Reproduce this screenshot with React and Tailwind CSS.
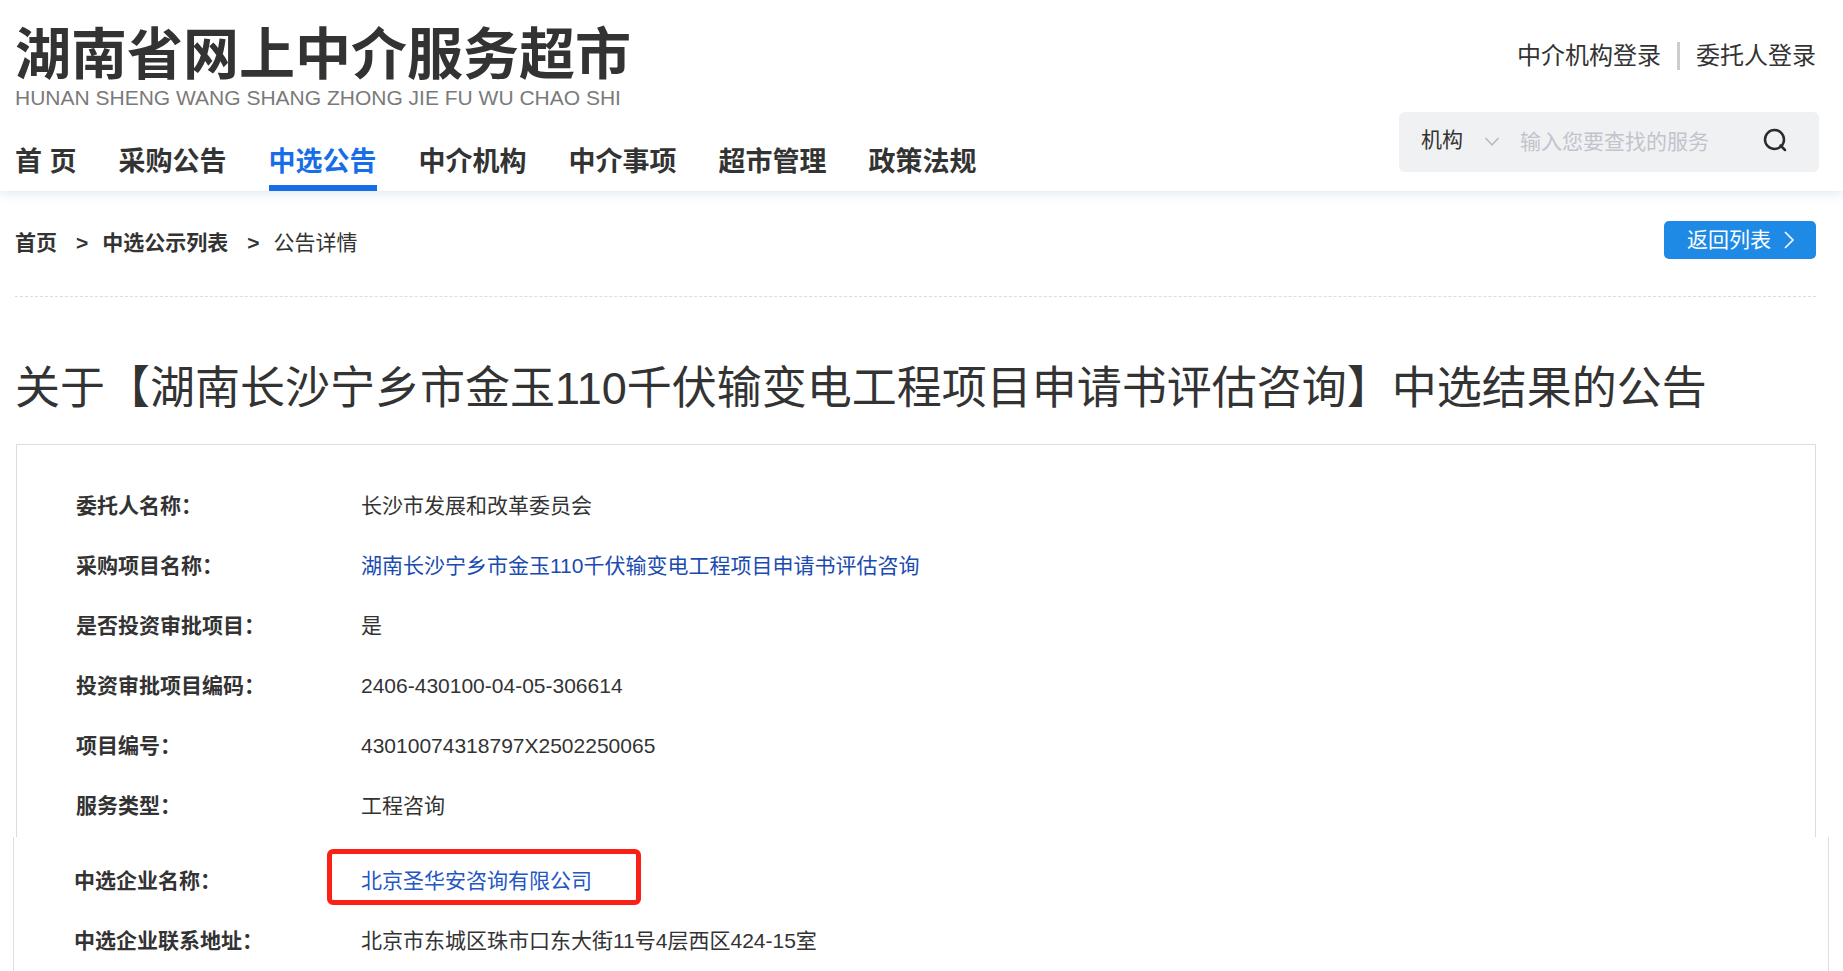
import { useState } from "react";

const navItems = ["首 页", "采购公告", "中选公告", "中介机构", "中介事项", "超市管理", "政策法规"];

const projectRows = [
  { label: "委托人名称：", value: "长沙市发展和改革委员会" },
  { label: "采购项目名称：", value: "湖南长沙宁乡市金玉110千伏输变电工程项目申请书评估咨询", link: true },
  { label: "是否投资审批项目：", value: "是" },
  { label: "投资审批项目编码：", value: "2406-430100-04-05-306614" },
  { label: "项目编号：", value: "43010074318797X2502250065" },
  { label: "服务类型：", value: "工程咨询" },
];

const winnerRows = [
  { label: "中选企业名称：", value: "北京圣华安咨询有限公司", link: true, marked: true },
  { label: "中选企业联系地址：", value: "北京市东城区珠市口东大街11号4层西区424-15室" },
];

function DetailValue({ row }) {
  if (row.marked) {
    return (
      <a
        href="#company"
        className="-mt-2 -ml-[34px] flex h-14 items-center rounded-md border-[5px] border-[#fb2016] pt-2 pr-[44px] pl-[29px] text-[#2456c4]"
      >
        {row.value}
      </a>
    );
  }
  if (row.link) {
    return (
      <a href="#project" className="text-[#1a4bb0] hover:underline">
        {row.value}
      </a>
    );
  }
  return row.value;
}

function DetailRows({ rows, labelClass }) {
  return (
    <dl className="flex flex-col gap-7 text-[21px] leading-8">
      {rows.map((row) => (
        <div key={row.label} className="flex h-8 items-center">
          <dt className={`shrink-0 font-bold ${labelClass}`}>{row.label}</dt>
          <dd className="flex items-center">
            <DetailValue row={row} />
          </dd>
        </div>
      ))}
    </dl>
  );
}

function SearchBar() {
  const [type, setType] = useState("机构");
  const [keyword, setKeyword] = useState("");

  return (
    <form
      onSubmit={(event) => event.preventDefault()}
      className="flex h-15 w-[420px] items-center rounded-md bg-[#f0f1f3] pr-8 pl-[22px]"
    >
      <div className="relative flex w-[99px] items-center">
        <select
          aria-label="搜索类型"
          value={type}
          onChange={(event) => setType(event.target.value)}
          className="h-10 w-20 appearance-none bg-transparent pb-1 text-[21px] text-[#333] outline-none"
        >
          <option value="机构">机构</option>
          <option value="服务">服务</option>
        </select>
        <svg
          className="pointer-events-none absolute left-[63px]"
          width="16"
          height="12"
          viewBox="0 0 16 12"
          fill="none"
          stroke="#b4b8bf"
          strokeWidth="1.5"
        >
          <path d="M1.5 2 8 9 14.5 2" />
        </svg>
      </div>
      <input
        aria-label="关键词"
        value={keyword}
        onChange={(event) => setKeyword(event.target.value)}
        placeholder="输入您要查找的服务"
        className="h-10 min-w-0 flex-1 bg-transparent text-[21px] text-[#333] outline-none placeholder:text-[#c0c4cc]"
      />
      <button type="submit" aria-label="搜索" className="pb-1">
        <svg width="24" height="24" viewBox="0 0 24 24" fill="none" stroke="#2b2b2b" strokeWidth="2.5">
          <circle cx="11.5" cy="11.5" r="9.5" />
          <path d="m17.5 17.5 4.5 4.5" strokeLinecap="round" />
        </svg>
      </button>
    </form>
  );
}

export default function App() {
  const [active, setActive] = useState("中选公告");

  return (
    <div className="flex min-h-screen flex-col bg-white font-['Liberation_Sans','Noto_Sans_CJK_SC',sans-serif] text-[#333]">
      <header className="flex justify-between bg-white pr-6 pl-[15px] shadow-[0_2px_12px_#dbe7ee]">
        <div>
          <h1 className="pt-[26px] text-[56px] leading-[58px] font-bold">湖南省网上中介服务超市</h1>
          <p className="text-[21px] leading-7 text-[#7a7a7a]">HUNAN SHENG WANG SHANG ZHONG JIE FU WU CHAO SHI</p>
          <nav className="mt-7 flex gap-[42px]">
            {navItems.map((item) => (
              <a
                key={item}
                href="#nav"
                onClick={() => setActive(item)}
                className={`border-b-6 pt-[2px] pb-[2px] text-[27px] leading-[41px] font-bold ${
                  item === active ? "border-[#176ee6] text-[#176ee6]" : "border-transparent"
                }`}
              >
                {item}
              </a>
            ))}
          </nav>
        </div>
        <div className="flex flex-col items-end pt-9">
          <div className="flex items-center pr-[3px] text-2xl leading-10">
            <a href="#agency">中介机构登录</a>
            <span className="mx-4 h-7 w-[3px] bg-[#ccc]" />
            <a href="#client">委托人登录</a>
          </div>
          <div className="mt-9">
            <SearchBar />
          </div>
        </div>
      </header>

      <main className="flex flex-1 flex-col">
        <div className="mr-[27px] ml-[15px] flex items-start justify-between border-b border-dashed border-[#ddd] pt-[30px] pb-[37px]">
          <nav aria-label="当前位置" className="flex pt-[6px] text-[21px] leading-8">
            <a href="#home" className="font-bold">首页</a>
            <span className="mr-[14px] ml-[19px] font-bold">&gt;</span>
            <a href="#list" className="font-bold">中选公示列表</a>
            <span className="mr-[14px] ml-[19px] font-bold">&gt;</span>
            <span>公告详情</span>
          </nav>
          <button
            type="button"
            className="flex h-[38px] w-[152px] items-center gap-3 rounded-[5px] bg-[#1e8ae6] pl-[23px] text-[21px] text-white"
          >
            返回列表
            <svg width="12" height="18" viewBox="0 0 12 18" fill="none" stroke="currentColor" strokeWidth="1.6">
              <path d="m2 1 8 8-8 8" />
            </svg>
          </button>
        </div>

        <h2 className="mr-[27px] ml-[15px] pt-[62px] pb-[25px] text-[45px] leading-[60px]">
          关于【湖南长沙宁乡市金玉110千伏输变电工程项目申请书评估咨询】中选结果的公告
        </h2>

        <section className="mr-[27px] ml-4 border-x border-t border-[#ddd] pt-[45px] pb-[15px] pl-[59px]">
          <DetailRows rows={projectRows} labelClass="w-[285px]" />
        </section>
        <section className="mr-[14px] ml-[13px] flex-1 border-x border-[#e0e0e0] pt-7 pb-3 pl-[60px]">
          <DetailRows rows={winnerRows} labelClass="w-[287px]" />
        </section>
      </main>
    </div>
  );
}
